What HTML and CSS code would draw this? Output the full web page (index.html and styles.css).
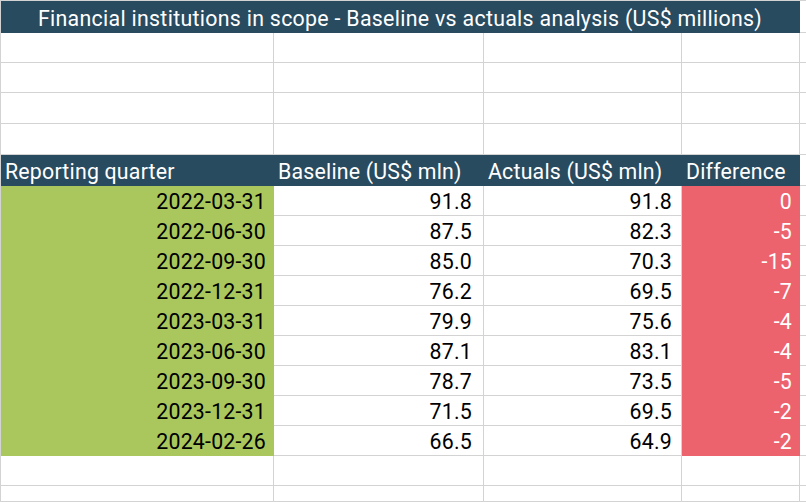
FILE: index.html
```html
<!DOCTYPE html>
<html>
<head>
<meta charset="utf-8">
<link rel="stylesheet" href="styles.css">
</head>
<body>
<div class="sheet">
  <div class="cell title span4">Financial institutions in scope - Baseline vs actuals analysis (US$ millions)</div><div class="cell"></div>

  <div class="cell"></div><div class="cell"></div><div class="cell"></div><div class="cell"></div><div class="cell"></div>
  <div class="cell"></div><div class="cell"></div><div class="cell"></div><div class="cell"></div><div class="cell"></div>
  <div class="cell"></div><div class="cell"></div><div class="cell"></div><div class="cell"></div><div class="cell"></div>
  <div class="cell"></div><div class="cell"></div><div class="cell"></div><div class="cell"></div><div class="cell"></div>

  <div class="cell head">Reporting quarter</div><div class="cell head">Baseline (US$ mln)</div><div class="cell head">Actuals (US$ mln)</div><div class="cell head">Difference</div><div class="cell"></div>

  <div class="cell date">2022-03-31</div><div class="cell num b">91.8</div><div class="cell num c">91.8</div><div class="cell diff">0</div><div class="cell"></div>
  <div class="cell date">2022-06-30</div><div class="cell num b">87.5</div><div class="cell num c">82.3</div><div class="cell diff">-5</div><div class="cell"></div>
  <div class="cell date">2022-09-30</div><div class="cell num b">85.0</div><div class="cell num c">70.3</div><div class="cell diff">-15</div><div class="cell"></div>
  <div class="cell date">2022-12-31</div><div class="cell num b">76.2</div><div class="cell num c">69.5</div><div class="cell diff">-7</div><div class="cell"></div>
  <div class="cell date">2023-03-31</div><div class="cell num b">79.9</div><div class="cell num c">75.6</div><div class="cell diff">-4</div><div class="cell"></div>
  <div class="cell date">2023-06-30</div><div class="cell num b">87.1</div><div class="cell num c">83.1</div><div class="cell diff">-4</div><div class="cell"></div>
  <div class="cell date">2023-09-30</div><div class="cell num b">78.7</div><div class="cell num c">73.5</div><div class="cell diff">-5</div><div class="cell"></div>
  <div class="cell date">2023-12-31</div><div class="cell num b">71.5</div><div class="cell num c">69.5</div><div class="cell diff">-2</div><div class="cell"></div>
  <div class="cell date">2024-02-26</div><div class="cell num b">66.5</div><div class="cell num c">64.9</div><div class="cell diff">-2</div><div class="cell"></div>

  <div class="cell"></div><div class="cell"></div><div class="cell"></div><div class="cell"></div><div class="cell"></div>
  <div class="cell"></div><div class="cell"></div><div class="cell"></div><div class="cell"></div><div class="cell"></div>
</div>
</body>
</html>
```

FILE: styles.css
```css
html, body {
  margin: 0;
  padding: 0;
  background: #ffffff;
  overflow: hidden;
}

.sheet {
  width: 806px;
  height: 502px;
  box-sizing: border-box;
  border-top: 1px solid #d3d3d3;
  border-left: 1px solid #d3d3d3;
  display: grid;
  grid-template-columns: 273px 210px 198px 118px 1fr;
  grid-template-rows: 32px 30px 30px 31px 31px 31px repeat(9, 30px) 30px 1fr;
  font-family: Roboto, "Liberation Sans", sans-serif;
  font-size: 21.33px;
  line-height: 21px;
  letter-spacing: 0.2px;
  color: #000000;
}

.cell {
  box-sizing: border-box;
  border-right: 1px solid #d3d3d3;
  border-bottom: 1px solid #d3d3d3;
  display: flex;
  align-items: flex-end;
  padding: 0 4px 3px 4px;
  white-space: nowrap;
  overflow: visible;
}

.span4 {
  grid-column: span 4;
}

.title {
  background: #294b5f;
  border-color: #294b5f;
  color: #ffffff;
  justify-content: center;
  letter-spacing: 0.3px;
}

.head {
  background: #294b5f;
  border-color: #294b5f;
  color: #ffffff;
  padding-left: 4px;
}

.date {
  background: #a9c75c;
  border-color: #a9c75c;
  justify-content: flex-end;
  padding-right: 7px;
}

.num {
  justify-content: flex-end;
}

.num.b {
  padding-right: 11px;
}

.num.c {
  padding-right: 9px;
}

.diff {
  background: #ec636e;
  border-color: #ec636e;
  color: #ffffff;
  justify-content: flex-end;
  padding-right: 7px;
}
```
